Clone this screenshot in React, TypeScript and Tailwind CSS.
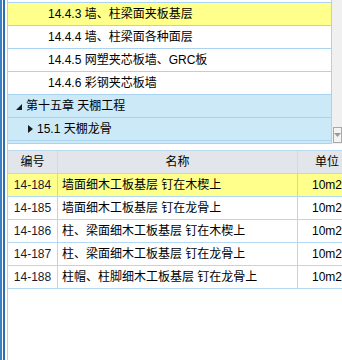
import React from "react";

const font = { fontFamily: '"Liberation Sans", "Noto Sans CJK SC", sans-serif' };

function TreeRow({ bg, children }: { bg: string; children: React.ReactNode }) {
  return (
    <div className={`h-[23px] border-b border-[#a9d3f0] flex items-center text-[12px] text-black ${bg}`}>
      {children}
    </div>
  );
}

const rows = [
  { code: "14-184", name: "墙面细木工板基层 钉在木楔上", unit: "10m2", sel: true },
  { code: "14-185", name: "墙面细木工板基层 钉在龙骨上", unit: "10m2" },
  { code: "14-186", name: "柱、梁面细木工板基层 钉在木楔上", unit: "10m2" },
  { code: "14-187", name: "柱、梁面细木工板基层 钉在龙骨上", unit: "10m2" },
  { code: "14-188", name: "柱帽、柱脚细木工板基层 钉在龙骨上", unit: "10m2" },
];

export default function App() {
  return (
    <div className="w-[342px] h-[360px] bg-white flex overflow-hidden" style={font}>
      {/* left stripes */}
      <div className="flex h-full shrink-0">
        <div className="w-[2px] bg-[#3a80c6]" />
        <div className="w-[1px] bg-white" />
        <div className="w-[2px] bg-[#2b6fb8]" />
        <div className="w-[2px] bg-white" />
        <div className="w-[1px] bg-[#a9d3f0]" />
      </div>
      <div className="flex flex-col w-[334px] shrink-0">
        {/* tree area */}
        <div className="flex h-[144px]">
          <div className="w-[324px] border-r border-[#a9d3f0] flex flex-col">
            <div className="h-[3px] border-b border-[#a9d3f0] bg-white" />
            <TreeRow bg="bg-[#ffff8c]">
              <span className="pl-[40px]">14.4.3 墙、柱梁面夹板基层</span>
            </TreeRow>
            <TreeRow bg="bg-white">
              <span className="pl-[40px]">14.4.4 墙、柱梁面各种面层</span>
            </TreeRow>
            <TreeRow bg="bg-white">
              <span className="pl-[40px]">14.4.5 网塑夹芯板墙、GRC板</span>
            </TreeRow>
            <TreeRow bg="bg-white">
              <span className="pl-[40px]">14.4.6 彩钢夹芯板墙</span>
            </TreeRow>
            <TreeRow bg="bg-[#cce9f7]">
              <svg width="6" height="6" viewBox="0 0 6 6" className="ml-[8px] mr-[4px] mt-[2px]">
                <polygon points="6,0 6,6 0,6" fill="#1a1a1a" />
              </svg>
              <span>第十五章 天棚工程</span>
            </TreeRow>
            <TreeRow bg="bg-[#cce9f7]">
              <svg width="5" height="8" viewBox="0 0 5 8" className="ml-[20px] mr-[4px]">
                <polygon points="0,0 5,4 0,8" fill="#1a1a1a" />
              </svg>
              <span>15.1 天棚龙骨</span>
            </TreeRow>
            <div className="flex-1 bg-[#cce9f7] border-b border-[#a9d3f0]" />
          </div>
          <div className="w-[10px] bg-[#f0f0f0] flex flex-col justify-end pb-[1px]">
            <div className="h-[16px] w-[9px] ml-[1px] border border-[#a8a8a8] bg-[#f3f3f3] flex items-center justify-center">
              <svg width="7" height="4" viewBox="0 0 7 4">
                <polygon points="0,0 7,0 3.5,4" fill="#9a9a9a" />
              </svg>
            </div>
          </div>
        </div>
        <div className="h-[6px]" />
        {/* table */}
        <div className="flex flex-col text-[12px] text-black">
          <div className="flex h-[24px] bg-[#e2e6eb] border-t border-b border-[#b9d9f1]">
            <div className="w-[50px] shrink-0 border-r border-[#c9dcec] flex items-center justify-center">编号</div>
            <div className="w-[240px] shrink-0 border-r border-[#c9dcec] flex items-center justify-center">名称</div>
            <div className="w-[58px] shrink-0 flex items-center justify-center">单位</div>
          </div>
          {rows.map((r) => (
            <div
              key={r.code}
              className={`flex h-[23px] border-b border-[#b3d8f3] ${r.sel ? "bg-[#ffff8c]" : "bg-white"}`}
            >
              <div className="w-[50px] shrink-0 border-r border-[#b3d8f3] flex items-center justify-center text-[#1a1a2e]">
                {r.code}
              </div>
              <div className="w-[240px] shrink-0 border-r border-[#b3d8f3] flex items-center pl-[4px] whitespace-nowrap">
                {r.name}
              </div>
              <div className="w-[58px] shrink-0 flex items-center justify-center">{r.unit}</div>
            </div>
          ))}
        </div>
      </div>
    </div>
  );
}
